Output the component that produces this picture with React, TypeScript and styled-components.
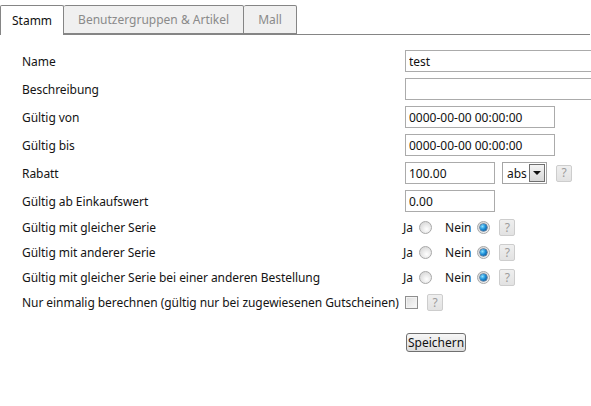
import React from "react";
import styled, { createGlobalStyle } from "styled-components";

const Global = createGlobalStyle`
  html, body { margin: 0; padding: 0; background: #fff; }
  body {
    font-family: "Noto Sans", "Liberation Sans", Arial, sans-serif;
    font-size: 12px;
    color: #141414;
  }
`;

const Page = styled.div`
  width: 591px;
  height: 406px;
  overflow: hidden;
  padding-top: 5px;
  box-sizing: border-box;
`;

const TabBar = styled.div`
  display: flex;
  align-items: flex-end;
  height: 29px;
  border-bottom: 1px solid #858585;
  margin-right: 1px;
`;

const Tab = styled.div<{ $active?: boolean; $pad?: number }>`
  box-sizing: border-box;
  height: ${(p) => (p.$active ? "30px" : "29px")};
  margin-bottom: ${(p) => (p.$active ? "-1px" : "0")};
  padding: 0 ${(p) => p.$pad ?? 13}px;
  display: flex;
  align-items: center;
  padding-bottom: ${(p) => (p.$active ? "1px" : "0")};
  border: 1px solid #858585;
  border-left-width: ${(p) => (p.$active ? "1px" : "0")};
  border-bottom: ${(p) => (p.$active ? "none" : "1px solid #858585")};
  border-radius: 2px 2px 0 0;
  background: ${(p) => (p.$active ? "#fff" : "#f0f0f0")};
  color: ${(p) => (p.$active ? "#111" : "#8a8a8a")};
  white-space: nowrap;
`;

const Form = styled.div`
  padding: 12px 0 0 22px;
`;

const Row = styled.div<{ $tight?: boolean }>`
  display: flex;
  align-items: center;
  padding: 3px 0;
  height: ${(p) => (p.$tight ? "19px" : "22px")};
`;

const Label = styled.div`
  width: 383px;
  flex: none;
  white-space: nowrap;
  letter-spacing: -0.06px;
`;

const Controls = styled.div<{ $shift?: number }>`
  display: flex;
  align-items: center;
  flex: 1;
  min-width: 0;
  margin-left: ${(p) => p.$shift ?? 0}px;
`;

const TextInput = styled.input<{ $w?: number }>`
  box-sizing: border-box;
  height: 22px;
  width: ${(p) => (p.$w ? `${p.$w}px` : "220px")};
  flex: none;
  border: 1px solid #ababab;
  padding: 0 3px;
  font: inherit;
  color: #111;
  outline: none;
  background: #fff;
`;

const Select = styled.div`
  box-sizing: border-box;
  margin-left: 7px;
  width: 45px;
  height: 22px;
  border: 1px solid #a5a5a5;
  display: flex;
  align-items: center;
  padding: 1px;
  background: #fff;
`;

const SelectText = styled.span`
  flex: 1;
  padding-left: 3px;
  overflow: hidden;
`;

const SelectArrow = styled.span`
  box-sizing: border-box;
  flex: none;
  width: 16px;
  height: 18px;
  border: 1px solid #6f6f6f;
  background: linear-gradient(#f4f4f4, #d8d8d8);
  display: flex;
  align-items: center;
  justify-content: center;
  &::after {
    content: "";
    border-left: 4px solid transparent;
    border-right: 4px solid transparent;
    border-top: 4px solid #111;
  }
`;

const Help = styled.span<{ $gap?: number }>`
  box-sizing: border-box;
  margin-left: ${(p) => p.$gap ?? 9}px;
  width: 16px;
  height: 17px;
  flex: none;
  border: 1px solid #cdcdcd;
  border-radius: 2px;
  background: linear-gradient(#efefef, #e2e2e2);
  color: #9c9c9c;
  display: flex;
  align-items: center;
  justify-content: center;
  font-size: 12px;
  line-height: 1;
`;

const Choice = styled.span<{ $gap?: number }>`
  margin-left: ${(p) => p.$gap ?? 0}px;
`;

const Radio = styled.span<{ $on?: boolean }>`
  box-sizing: border-box;
  display: inline-flex;
  align-items: center;
  justify-content: center;
  width: 13px;
  height: 13px;
  margin-left: 6px;
  border-radius: 50%;
  border: 1px solid #a8a8a8;
  background: radial-gradient(circle at 60% 65%, #ffffff 0%, #e4e4e4 55%, #cfcfcf 100%);
  &::after {
    content: "";
    display: ${(p) => (p.$on ? "block" : "none")};
    width: 7px;
    height: 7px;
    border-radius: 50%;
    background: radial-gradient(circle at 35% 35%, #8fe3ff 0%, #1c8fd8 45%, #0d3f7a 100%);
    box-shadow: 0 0 0 0.5px #133a66;
  }
`;

const Check = styled.span`
  box-sizing: border-box;
  width: 13px;
  height: 13px;
  border: 1px solid #8f8f8f;
  background: linear-gradient(135deg, #dcdcdc, #fbfbfb);
  box-shadow: inset 0 0 0 1px #f3f3f3;
`;

const Spacer = styled.div`
  height: 18px;
`;

const Button = styled.button`
  margin-left: 384px;
  box-sizing: border-box;
  height: 19px;
  padding: 0 1px;
  border: 1px solid #707070;
  border-radius: 3px;
  background: linear-gradient(#f6f6f6, #dddddd);
  font: inherit;
  color: #111;
  line-height: 15px;
`;

const Rule = () => (
  <Controls $shift={-2}>
    <Choice>Ja</Choice>
    <Radio />
    <Choice $gap={13}>Nein</Choice>
    <Radio $on />
    <Help>?</Help>
  </Controls>
);

export default function App() {
  return (
    <Page>
      <Global />
      <TabBar>
        <Tab $active $pad={11}>Stamm</Tab>
        <Tab $pad={14}>Benutzergruppen &amp; Artikel</Tab>
        <Tab $pad={14}>Mall</Tab>
      </TabBar>
      <Form>
        <Row>
          <Label>Name</Label>
          <Controls>
            <TextInput defaultValue="test" $w={200} />
          </Controls>
        </Row>
        <Row>
          <Label>Beschreibung</Label>
          <Controls>
            <TextInput defaultValue="" $w={200} />
          </Controls>
        </Row>
        <Row>
          <Label>Gültig von</Label>
          <Controls>
            <TextInput defaultValue="0000-00-00 00:00:00" $w={150} />
          </Controls>
        </Row>
        <Row>
          <Label>Gültig bis</Label>
          <Controls>
            <TextInput defaultValue="0000-00-00 00:00:00" $w={150} />
          </Controls>
        </Row>
        <Row>
          <Label>Rabatt</Label>
          <Controls>
            <TextInput defaultValue="100.00" $w={90} />
            <Select>
              <SelectText>abs</SelectText>
              <SelectArrow />
            </Select>
            <Help>?</Help>
          </Controls>
        </Row>
        <Row>
          <Label>Gültig ab Einkaufswert</Label>
          <Controls>
            <TextInput defaultValue="0.00" $w={90} />
          </Controls>
        </Row>
        <Row $tight>
          <Label>Gültig mit gleicher Serie</Label>
          <Rule />
        </Row>
        <Row $tight>
          <Label>Gültig mit anderer Serie</Label>
          <Rule />
        </Row>
        <Row $tight>
          <Label>Gültig mit gleicher Serie bei einer anderen Bestellung</Label>
          <Rule />
        </Row>
        <Row $tight>
          <Label>Nur einmalig berechnen (gültig nur bei zugewiesenen Gutscheinen)</Label>
          <Controls>
            <Check />
            <Help $gap={9}>?</Help>
          </Controls>
        </Row>
        <Spacer />
        <Button>Speichern</Button>
      </Form>
    </Page>
  );
}
